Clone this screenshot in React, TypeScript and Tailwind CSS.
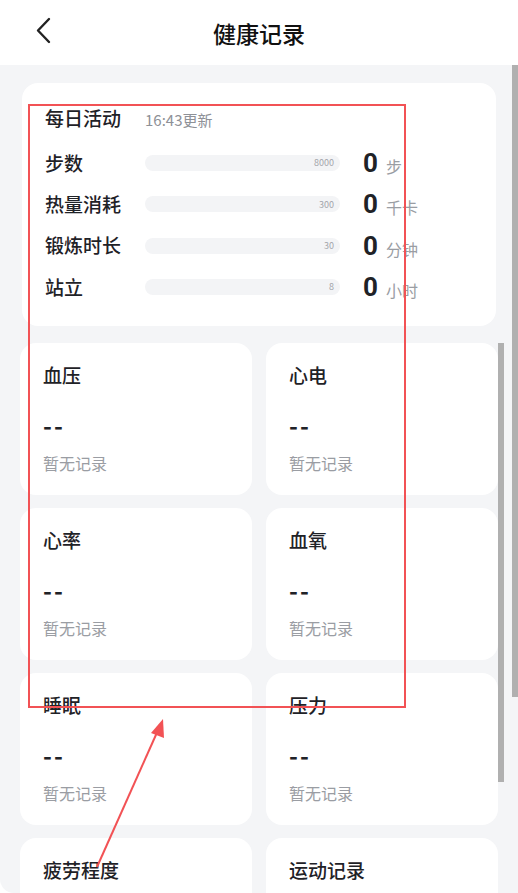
import React from 'react';

const rows = [
  { label: '步数', goal: '8000', unit: '步' },
  { label: '热量消耗', goal: '300', unit: '千卡' },
  { label: '锻炼时长', goal: '30', unit: '分钟' },
  { label: '站立', goal: '8', unit: '小时' },
];

const cards = ['血压', '心电', '心率', '血氧', '睡眠', '压力', '疲劳程度', '运动记录'];

function MetricCard({ title }: { title: string }) {
  return (
    <div className="h-[152px] rounded-[16px] bg-white pl-[23px] pt-[20px]">
      <div className="text-[19px] leading-[24px] font-medium text-[#1f2227]">{title}</div>
      <div className="mt-[24px] text-[24px] leading-[28px] font-bold tracking-[2px] text-[#1f2227]">--</div>
      <div className="mt-[13px] text-[16px] leading-[22px] text-[#9a9da3]">暂无记录</div>
    </div>
  );
}

export default function App() {
  return (
    <div
      className="relative h-[893px] w-[518px] overflow-hidden bg-white"
      style={{ fontFamily: '"Noto Sans CJK SC", "Noto Sans", sans-serif' }}
    >
      {/* Header */}
      <div className="relative flex h-[65px] items-center justify-center bg-white">
        <svg className="absolute left-[33px] top-[17px]" width="22" height="27" viewBox="0 0 22 27" fill="none">
          <path d="M16 2 L5 13.5 L16 25" stroke="#222" strokeWidth="2.4" strokeLinecap="round" strokeLinejoin="round" />
        </svg>
        <h1 className="text-[23px] leading-[30px] font-medium text-[#111]">健康记录</h1>
      </div>

      {/* Body */}
      <div className="h-[828px] rounded-bl-[14px] bg-[#f4f5f7] px-[20px] pt-[18px]">
        <div className="mx-[2px] h-[243px] rounded-[16px] bg-white pl-[23px] pt-[22px]">
          <div className="flex items-baseline">
            <span className="w-[100px] text-[19px] leading-[26px] font-medium text-[#1f2227]">每日活动</span>
            <span className="text-[15px] text-[#8e9197]">16:43更新</span>
          </div>
          <div className="mt-[11px] flex flex-col">
            {rows.map((r) => (
              <div key={r.label} className="flex h-[41.3px] items-center">
                <span className="w-[100px] text-[19px] font-medium text-[#1f2227]">{r.label}</span>
                <div className="flex h-[16px] w-[195px] items-center justify-end rounded-full bg-[#f3f4f6] pr-[6px]">
                  <span className="text-[9px] text-[#a3a6ab]">{r.goal}</span>
                </div>
                <span className="ml-[23px] text-[26px] leading-[28px] font-bold text-[#1f2227]" style={{ fontFamily: 'Roboto, "Noto Sans", sans-serif' }}>0</span>
                <span className="ml-[8px] mt-[6px] text-[16px] text-[#9a9da3]">{r.unit}</span>
              </div>
            ))}
          </div>
        </div>

        <div className="mt-[17px] grid grid-cols-2 gap-x-[14px] gap-y-[13px]">
          {cards.map((c) => (
            <MetricCard key={c} title={c} />
          ))}
        </div>
      </div>

      {/* scrollbars */}
      <div className="absolute left-[498px] top-[343px] h-[439px] w-[6px] bg-[#b0b0b0]" />
      <div className="absolute left-[512px] top-[65px] h-[632px] w-[6px] bg-[#b0b0b0]" />

      {/* annotation */}
      <div className="pointer-events-none absolute left-[28px] top-[104px] h-[604px] w-[378px] border-2 border-[#f25255]" />
      <svg className="pointer-events-none absolute left-0 top-0" width="518" height="893">
        <line x1="97" y1="867" x2="159" y2="728" stroke="#f25255" strokeWidth="2" />
        <polygon points="163,719 151,733 164,738" fill="#f25255" />
      </svg>
    </div>
  );
}
